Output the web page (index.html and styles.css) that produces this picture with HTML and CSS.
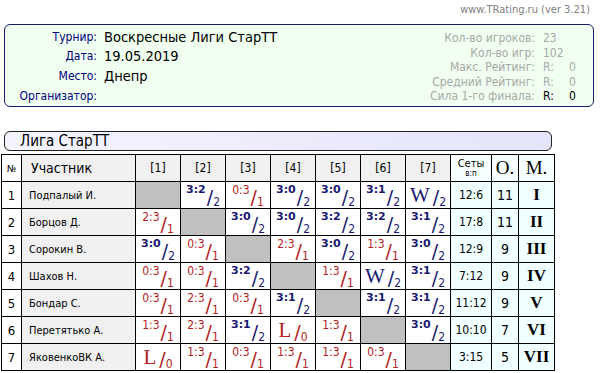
FILE: index.html
```html
<!DOCTYPE html>
<html>
<head>
<meta charset="utf-8">
<link rel="stylesheet" href="styles.css">
</head>
<body>
<div class="site">www.TRating.ru (ver 3.21)</div>
<div class="info">
  <div class="info-left">
    <div class="lab">Турнир:</div><div class="val">Воскресные Лиги СтарТТ</div>
    <div class="lab">Дата:</div><div class="val">19.05.2019</div>
    <div class="lab">Место:</div><div class="val">Днепр</div>
    <div class="lab">Организатор:</div><div class="val"></div>
  </div>
  <div class="info-right">
    <div class="rl">Кол-во игроков:</div><div class="rv">23</div>
    <div class="rl">Кол-во игр:</div><div class="rv">102</div>
    <div class="rl">Макс. Рейтинг:</div><div class="rv"><span class="rr">R:</span>0</div>
    <div class="rl">Средний Рейтинг:</div><div class="rv"><span class="rr">R:</span>0</div>
    <div class="rl">Сила 1-го финала:</div><div class="rv dark"><span class="rr">R:</span>0</div>
  </div>
</div>
<div class="league">Лига СтарТТ</div>
<table class="grid">
  <colgroup>
    <col class="c-no"><col class="c-name">
    <col class="c-r"><col class="c-r"><col class="c-r"><col class="c-r"><col class="c-r"><col class="c-r"><col class="c-r">
    <col class="c-sets"><col class="c-o"><col class="c-m">
  </colgroup>
  <tr class="head">
    <th class="h-no">№</th><th class="h-name">Участник</th>
    <th>[1]</th><th>[2]</th><th>[3]</th><th>[4]</th><th>[5]</th><th>[6]</th><th>[7]</th>
    <th class="h-sets">Сеты<span class="vp">в:п</span></th><th class="h-om">O.</th><th class="h-om">M.</th>
  </tr>
  <tr>
    <td class="no">1</td><td class="name">Подпалый И.</td>
    <td class="x"></td>
    <td><div class="res win"><span class="s">3:2</span><span class="f">/</span><span class="p">2</span></div></td>
    <td><div class="res loss"><span class="s">0:3</span><span class="f">/</span><span class="p">1</span></div></td>
    <td><div class="res win"><span class="s">3:0</span><span class="f">/</span><span class="p">2</span></div></td>
    <td><div class="res win"><span class="s">3:0</span><span class="f">/</span><span class="p">2</span></div></td>
    <td><div class="res win"><span class="s">3:1</span><span class="f">/</span><span class="p">2</span></div></td>
    <td><div class="res win"><span class="big">W</span><span class="f">/</span><span class="p">2</span></div></td>
    <td class="sets">12:6</td><td class="pts">11</td><td class="pl">I</td>
  </tr>
  <tr>
    <td class="no">2</td><td class="name">Борцов Д.</td>
    <td><div class="res loss"><span class="s">2:3</span><span class="f">/</span><span class="p">1</span></div></td>
    <td class="x"></td>
    <td><div class="res win"><span class="s">3:0</span><span class="f">/</span><span class="p">2</span></div></td>
    <td><div class="res win"><span class="s">3:0</span><span class="f">/</span><span class="p">2</span></div></td>
    <td><div class="res win"><span class="s">3:2</span><span class="f">/</span><span class="p">2</span></div></td>
    <td><div class="res win"><span class="s">3:2</span><span class="f">/</span><span class="p">2</span></div></td>
    <td><div class="res win"><span class="s">3:1</span><span class="f">/</span><span class="p">2</span></div></td>
    <td class="sets">17:8</td><td class="pts">11</td><td class="pl">II</td>
  </tr>
  <tr>
    <td class="no">3</td><td class="name">Сорокин В.</td>
    <td><div class="res win"><span class="s">3:0</span><span class="f">/</span><span class="p">2</span></div></td>
    <td><div class="res loss"><span class="s">0:3</span><span class="f">/</span><span class="p">1</span></div></td>
    <td class="x"></td>
    <td><div class="res loss"><span class="s">2:3</span><span class="f">/</span><span class="p">1</span></div></td>
    <td><div class="res win"><span class="s">3:0</span><span class="f">/</span><span class="p">2</span></div></td>
    <td><div class="res loss"><span class="s">1:3</span><span class="f">/</span><span class="p">1</span></div></td>
    <td><div class="res win"><span class="s">3:0</span><span class="f">/</span><span class="p">2</span></div></td>
    <td class="sets">12:9</td><td class="pts">9</td><td class="pl">III</td>
  </tr>
  <tr>
    <td class="no">4</td><td class="name">Шахов Н.</td>
    <td><div class="res loss"><span class="s">0:3</span><span class="f">/</span><span class="p">1</span></div></td>
    <td><div class="res loss"><span class="s">0:3</span><span class="f">/</span><span class="p">1</span></div></td>
    <td><div class="res win"><span class="s">3:2</span><span class="f">/</span><span class="p">2</span></div></td>
    <td class="x"></td>
    <td><div class="res loss"><span class="s">1:3</span><span class="f">/</span><span class="p">1</span></div></td>
    <td><div class="res win"><span class="big">W</span><span class="f">/</span><span class="p">2</span></div></td>
    <td><div class="res win"><span class="s">3:1</span><span class="f">/</span><span class="p">2</span></div></td>
    <td class="sets">7:12</td><td class="pts">9</td><td class="pl">IV</td>
  </tr>
  <tr>
    <td class="no">5</td><td class="name">Бондар С.</td>
    <td><div class="res loss"><span class="s">0:3</span><span class="f">/</span><span class="p">1</span></div></td>
    <td><div class="res loss"><span class="s">2:3</span><span class="f">/</span><span class="p">1</span></div></td>
    <td><div class="res loss"><span class="s">0:3</span><span class="f">/</span><span class="p">1</span></div></td>
    <td><div class="res win"><span class="s">3:1</span><span class="f">/</span><span class="p">2</span></div></td>
    <td class="x"></td>
    <td><div class="res win"><span class="s">3:1</span><span class="f">/</span><span class="p">2</span></div></td>
    <td><div class="res win"><span class="s">3:1</span><span class="f">/</span><span class="p">2</span></div></td>
    <td class="sets">11:12</td><td class="pts">9</td><td class="pl">V</td>
  </tr>
  <tr>
    <td class="no">6</td><td class="name">Перетятько А.</td>
    <td><div class="res loss"><span class="s">1:3</span><span class="f">/</span><span class="p">1</span></div></td>
    <td><div class="res loss"><span class="s">2:3</span><span class="f">/</span><span class="p">1</span></div></td>
    <td><div class="res win"><span class="s">3:1</span><span class="f">/</span><span class="p">2</span></div></td>
    <td><div class="res loss"><span class="big">L</span><span class="f">/</span><span class="p">0</span></div></td>
    <td><div class="res loss"><span class="s">1:3</span><span class="f">/</span><span class="p">1</span></div></td>
    <td class="x"></td>
    <td><div class="res win"><span class="s">3:0</span><span class="f">/</span><span class="p">2</span></div></td>
    <td class="sets">10:10</td><td class="pts">7</td><td class="pl">VI</td>
  </tr>
  <tr>
    <td class="no">7</td><td class="name">ЯковенкоВК А.</td>
    <td><div class="res loss"><span class="big">L</span><span class="f">/</span><span class="p">0</span></div></td>
    <td><div class="res loss"><span class="s">1:3</span><span class="f">/</span><span class="p">1</span></div></td>
    <td><div class="res loss"><span class="s">0:3</span><span class="f">/</span><span class="p">1</span></div></td>
    <td><div class="res loss"><span class="s">1:3</span><span class="f">/</span><span class="p">1</span></div></td>
    <td><div class="res loss"><span class="s">1:3</span><span class="f">/</span><span class="p">1</span></div></td>
    <td><div class="res loss"><span class="s">0:3</span><span class="f">/</span><span class="p">1</span></div></td>
    <td class="x"></td>
    <td class="sets">3:15</td><td class="pts">5</td><td class="pl">VII</td>
  </tr>
</table>
</body>
</html>
```
FILE: styles.css
```css
html, body {
  margin: 0;
  padding: 0;
  background: #fff;
}
body {
  width: 600px;
  height: 373px;
  overflow: hidden;
  font-family: "DejaVu Sans Condensed", "DejaVu Sans", sans-serif;
  color: #000;
}
.site {
  height: 24px;
  line-height: 20px;
  padding-right: 10px;
  text-align: right;
  font-size: 11px;
  color: #808080;
}
.info {
  margin-left: 4px;
  width: 588px;
  height: 81px;
  border: 1px solid #1a1a70;
  border-radius: 6px;
  background: #f0fff0;
  display: flex;
  justify-content: space-between;
}
.info-left {
  display: grid;
  grid-template-columns: 92px auto;
  column-gap: 7px;
  grid-auto-rows: 19.6px;
  align-content: start;
  padding-top: 2px;
  align-items: center;
}
.lab {
  text-align: right;
  font-size: 12px;
  color: #000080;
}
.val {
  font-size: 14.5px;
  white-space: nowrap;
}
.info-right {
  display: grid;
  grid-template-columns: auto 34px;
  column-gap: 8px;
  grid-auto-rows: 14.5px;
  align-content: start;
  align-items: center;
  padding-top: 6px;
  padding-right: 16px;
}
.rl {
  text-align: right;
  font-size: 12px;
  color: #a8a8a8;
}
.rv {
  font-size: 12px;
  color: #a8a8a8;
  white-space: nowrap;
}
.rv.dark {
  color: #000;
}
.rr {
  display: inline-block;
  width: 26px;
}
.league {
  margin: 24px 0 0 4px;
  width: 531px;
  height: 18px;
  line-height: 18px;
  padding-left: 15px;
  border: 1px solid #202020;
  border-radius: 6px;
  background: linear-gradient(to right, #f4f4ff, #e4e4fa);
  font-size: 15px;
}
.grid {
  margin: 3px 0 0 1px;
  border-collapse: collapse;
  table-layout: fixed;
  width: 552px;
}
.c-no { width: 20px; }
.c-name { width: 114px; }
.c-r { width: 45px; }
.c-sets { width: 41px; }
.c-o { width: 27px; }
.c-m { width: 36px; }
.grid th, .grid td {
  border: 1px solid #000;
  padding: 0;
  height: 26px;
  text-align: center;
  vertical-align: middle;
}
.grid th {
  background: #f0f0f0;
  font-weight: normal;
  font-size: 12px;
}
.grid th.h-no {
  background: #fff;
  font-size: 10px;
}
.grid th.h-name {
  text-align: left;
  padding-left: 9px;
  font-size: 14px;
}
.grid th.h-sets {
  background: #f8ffff;
  font-size: 11px;
  line-height: 10px;
}
.vp {
  display: block;
  font-size: 8px;
  line-height: 9px;
}
.grid th.h-om {
  background: #f8ffff;
  font-family: "Liberation Serif", serif;
  font-size: 19px;
}
.grid td.no {
  font-size: 13px;
}
.grid td.name {
  background: #f0f0f0;
  text-align: left;
  padding-left: 7px;
  font-size: 11px;
}
.grid td.x {
  background: #c0c0c0;
}
.grid td.sets {
  background: #f0ffff;
  font-size: 12px;
}
.grid td.pts {
  background: #f0ffff;
  font-size: 14px;
}
.grid td.pl {
  background: #f0ffff;
  font-family: "Liberation Serif", serif;
  font-weight: bold;
  font-size: 17px;
}
.res {
  display: flex;
  justify-content: center;
  height: 25px;
}
.res.win { color: #191970; }
.res.loss { color: #b22222; }
.res .s {
  align-self: flex-start;
  font-size: 12px;
  line-height: 12px;
  margin-top: 1px;
}
.res.win .s {
  font-family: "DejaVu Sans", sans-serif;
  font-weight: bold;
  font-size: 11px;
}
.res .big {
  align-self: center;
  font-family: "Liberation Serif", serif;
  font-size: 21px;
  line-height: 21px;
  margin-right: 2px;
}
.res .f {
  align-self: flex-end;
  font-family: "DejaVu Sans", sans-serif;
  font-size: 19px;
  line-height: 21px;
  margin-left: 1px;
}
.res .p {
  align-self: flex-end;
  font-size: 12px;
  line-height: 12px;
}
```
